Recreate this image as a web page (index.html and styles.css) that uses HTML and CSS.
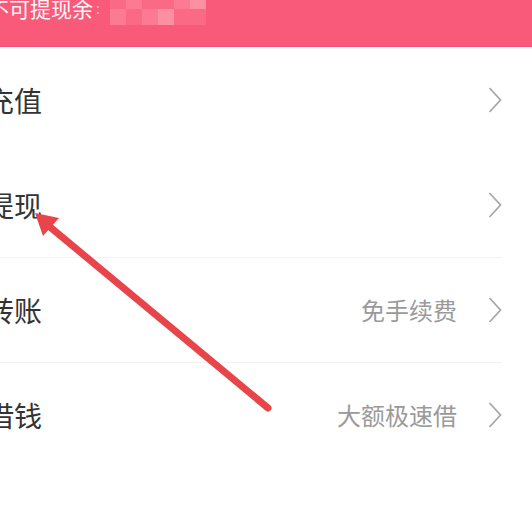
FILE: index.html
```html
<!DOCTYPE html>
<html lang="zh-CN">
<head>
<meta charset="utf-8">
<link rel="stylesheet" href="styles.css">
</head>
<body>
<div class="page">
  <header class="topbar">
    <div class="balance">
      <span class="balance-label">不可提现余</span><span class="mark">:</span>
      <span class="mosaic">
        <span class="mrow">
          <i class="m1"></i><i class="m2"></i><i class="m1"></i><i class="m1"></i><i class="m2"></i><i class="m3"></i>
        </span>
        <span class="mrow">
          <i class="m2"></i><i class="m1"></i><i class="m2"></i><i class="m3"></i><i class="m1"></i><i class="m1"></i>
        </span>
      </span>
    </div>
  </header>
  <ul class="menu">
    <li class="item">
      <span class="label">充值</span>
      <span class="right"><svg class="chev" viewBox="0 0 14 26" width="14" height="26"><polyline points="1.5,1 12.5,13 1.5,25" /></svg></span>
    </li>
    <li class="item">
      <span class="label">提现</span>
      <span class="right"><svg class="chev" viewBox="0 0 14 26" width="14" height="26"><polyline points="1.5,1 12.5,13 1.5,25" /></svg></span>
    </li>
    <li class="item sep">
      <span class="label">转账</span>
      <span class="right"><span class="hint">免手续费</span><svg class="chev" viewBox="0 0 14 26" width="14" height="26"><polyline points="1.5,1 12.5,13 1.5,25" /></svg></span>
    </li>
    <li class="item sep">
      <span class="label">借钱</span>
      <span class="right"><span class="hint">大额极速借</span><svg class="chev" viewBox="0 0 14 26" width="14" height="26"><polyline points="1.5,1 12.5,13 1.5,25" /></svg></span>
    </li>
  </ul>
  <svg class="arrow" viewBox="0 0 532 510" width="532" height="510">
    <line x1="268" y1="408" x2="50" y2="227" />
    <polygon points="35,213 59,218 43,236" />
  </svg>
</div>
</body>
</html>
```
FILE: styles.css
```css
* { box-sizing: border-box; }
html, body {
  margin: 0;
  padding: 0;
  background: #ffffff;
}
body {
  font-family: "Noto Sans CJK SC", "Noto Sans", sans-serif;
  width: 532px;
  height: 510px;
  overflow: hidden;
}
.page {
  position: relative;
  width: 532px;
  height: 510px;
  overflow: hidden;
}
.topbar {
  height: 47px;
  background: #fa5a79;
  border-bottom: 1px solid #f0507a;
  overflow: hidden;
}
.balance {
  display: flex;
  align-items: flex-start;
  margin-left: -12px;
  margin-top: -6px;
}
.balance-label {
  font-size: 21px;
  line-height: 28px;
  color: #fff5f7;
  white-space: nowrap;
}
.mark {
  font-size: 14px;
  line-height: 28px;
  color: rgba(255,255,255,0.6);
  margin-left: 3px;
}
.mosaic {
  display: flex;
  flex-direction: column;
  margin-left: 10px;
  margin-top: 6px;
}
.mrow {
  display: flex;
}
.mrow:first-child {
  margin-top: -8px;
}
.mosaic i {
  display: block;
  width: 16px;
  height: 16px;
}
.mrow:first-child i { height: 17px; }
.m1 { background: #fb6a85; }
.m2 { background: #fc7b93; }
.m3 { background: #fd8fa3; }
.menu {
  list-style: none;
  margin: 0 30px 0 -14px;
  padding: 0;
}
.item {
  height: 105px;
  display: flex;
  align-items: center;
  justify-content: space-between;
}
.item.sep {
  border-top: 1px solid #f2f2f2;
}
.label {
  font-size: 28px;
  line-height: 36px;
  color: #333333;
}
.right {
  display: flex;
  align-items: center;
  gap: 31px;
}
.hint {
  font-size: 24px;
  line-height: 32px;
  color: #9a9a9a;
}
.chev {
  display: block;
  fill: none;
  stroke: #a8a8a8;
  stroke-width: 1.8;
}
.arrow {
  position: absolute;
  left: 0;
  top: 0;
  pointer-events: none;
}
.arrow line {
  stroke: #e8454a;
  stroke-width: 7;
  stroke-linecap: round;
}
.arrow polygon {
  fill: #e8454a;
}
```
